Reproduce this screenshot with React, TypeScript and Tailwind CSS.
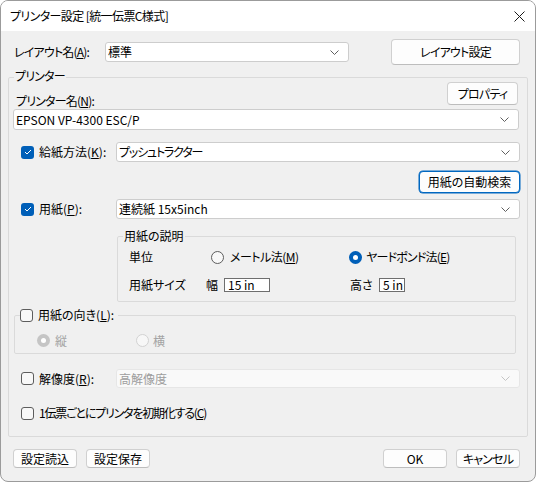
import React from 'react';

function Chevron({ disabled }: { disabled?: boolean }) {
  return (
    <svg width="9" height="5" viewBox="0 0 9 5" className="shrink-0">
      <path d="M0.5 0.5 L4.5 4.5 L8.5 0.5" fill="none" stroke={disabled ? '#c4c4c4' : '#5f5f5f'} strokeWidth="1" />
    </svg>
  );
}

function Select({
  value,
  className,
  textClass,
  disabled,
}: {
  value: string;
  className: string;
  textClass?: string;
  disabled?: boolean;
}) {
  return (
    <div
      className={
        'flex items-center justify-between rounded-[3px] border pl-[2px] pr-[9px] ' +
        (disabled ? 'bg-[#f9f9f9] border-[#e6e6e6] text-[#9d9d9d] ' : 'bg-white border-[#cdcdcd] ') +
        className
      }
    >
      <span className={textClass}>{value}</span>
      <Chevron disabled={disabled} />
    </div>
  );
}

function Button({ children, className, focused }: { children: React.ReactNode; className: string; focused?: boolean }) {
  return (
    <div
      className={
        'flex items-center justify-center rounded-[4px] border bg-[#fdfdfd] ' +
        (focused ? 'border-[#0067c0] shadow-[0_0_0_0.5px_#0067c0] ' : 'border-[#d0d0d0] border-b-[#bdbdbd] ') +
        className
      }
    >
      {children}
    </div>
  );
}

function Checkbox({ checked }: { checked?: boolean }) {
  if (checked) {
    return (
      <span className="flex h-[13px] w-[13px] shrink-0 items-center justify-center rounded-[3px] bg-[#005fb8]">
        <svg width="8" height="6" viewBox="0 0 8 6">
          <path d="M1 3 L3 5 L7 1" fill="none" stroke="#fff" strokeWidth="1" />
        </svg>
      </span>
    );
  }
  return <span className="h-[13px] w-[13px] shrink-0 rounded-[3px] border border-[#5d5d5d] bg-[#f8f8f8]" />;
}

function Radio({ checked, disabled }: { checked?: boolean; disabled?: boolean }) {
  if (checked) {
    return (
      <span
        className={
          'flex h-[13px] w-[13px] shrink-0 items-center justify-center rounded-full ' +
          (disabled ? 'bg-[#c5c5c5]' : 'bg-[#005fb8]')
        }
      >
        <span className="h-[5px] w-[5px] rounded-full bg-white" />
      </span>
    );
  }
  return (
    <span
      className={
        'h-[13px] w-[13px] shrink-0 rounded-full border ' +
        (disabled ? 'border-[#d2d2d2] bg-[#f7f7f7]' : 'border-[#5d5d5d] bg-[#f8f8f8]')
      }
    />
  );
}

export default function App() {
  return (
    <div className="h-[483px] w-[537px] bg-white font-[family-name:'Noto_Sans_CJK_JP',sans-serif] text-[12px] leading-[14px] text-black [font-feature-settings:'palt']">
      <div className="flex h-[482px] w-[536px] flex-col overflow-hidden rounded-[8px] border border-[#9b9b9b] bg-[#f0f0f0]">
        {/* title bar */}
        <div className="flex h-[30px] shrink-0 items-center justify-between bg-white pl-[9px] pr-[10px]">
          <span className="tracking-[-0.6px]">プリンター設定 [統一伝票C様式]</span>
          <svg width="11" height="11" viewBox="0 0 11 11">
            <path d="M0.5 0.5 L10.5 10.5 M10.5 0.5 L0.5 10.5" stroke="#1b1b1b" strokeWidth="1" />
          </svg>
        </div>

        {/* layout row */}
        <div className="mt-[8px] flex h-[26px] items-center pl-[13px] pr-[15px]">
          <span className="w-[91px] tracking-[-0.8px]">
            レイアウト名(<u>A</u>):
          </span>
          <Select value="標準" className="h-[20px] w-[244px]" />
          <Button className="ml-auto h-[26px] w-[129px] tracking-[-0.8px]">レイアウト設定</Button>
        </div>

        {/* printer group */}
        <div className="relative ml-[7px] mt-[12px] flex h-[360px] w-[520px] flex-col rounded-[2px] border border-[#dadada]">
          <span className="absolute -top-[9px] left-[5px] bg-[#f0f0f0] px-[1px] tracking-[-0.8px]">プリンター</span>

          <div className="mt-[4px] flex h-[23px] justify-between pl-[7px] pr-[9px]">
            <span className="mb-[-3px] self-end tracking-[-0.8px]">
              プリンター名(<u>N</u>):
            </span>
            <Button className="h-[23px] w-[71px] tracking-[-0.8px]">プロパティ</Button>
          </div>

          <Select value="EPSON VP-4300 ESC/P" className="ml-[4px] mt-[4px] h-[21px] w-[506px]" />

          <div className="mt-[12px] flex h-[20px] items-center pl-[12px]">
            <Checkbox checked />
            <span className="ml-[5px] w-[77px]">
              給紙方法(<u>K</u>):
            </span>
            <Select value="プッシュトラクター" textClass="tracking-[-1.2px]" className="h-[20px] w-[404px]" />
          </div>

          <Button focused className="mr-[7px] mt-[9px] h-[22px] w-[101px] self-end">
            用紙の自動検索
          </Button>

          <div className="mt-[6px] flex h-[20px] items-center pl-[12px]">
            <Checkbox checked />
            <span className="ml-[5px] w-[77px]">
              用紙(<u>P</u>):
            </span>
            <Select value="連続紙 15x5inch" className="h-[20px] w-[404px]" />
          </div>

          {/* paper description */}
          <div className="relative ml-[108px] mt-[17px] h-[66px] w-[399px] rounded-[2px] border border-[#dadada]">
            <span className="absolute -top-[8px] left-[5px] bg-[#f0f0f0] px-[1px]">用紙の説明</span>
            <div className="mt-[12px] flex h-[16px] items-center pl-[11px]">
              <span className="w-[82px]">単位</span>
              <div className="flex w-[138px] items-center">
                <Radio />
                <span className="ml-[6px] tracking-[-0.5px]">
                  メートル法(<u>M</u>)
                </span>
              </div>
              <div className="flex items-center">
                <Radio checked />
                <span className="ml-[4px] tracking-[-0.8px]">
                  ヤードポンド法(<u>E</u>)
                </span>
              </div>
            </div>
            <div className="mt-[12px] flex h-[16px] items-center pl-[11px]">
              <span className="w-[77px]">用紙サイズ</span>
              <span className="w-[18px]">幅</span>
              <span className="flex h-[14px] w-[46px] items-center border border-[#6e6e6e] bg-white pl-[3px]">15 in</span>
              <span className="w-[80px]" />
              <span className="w-[29px]">高さ</span>
              <span className="flex h-[14px] w-[26px] items-center border border-[#6e6e6e] bg-white pl-[3px]">5 in</span>
            </div>
          </div>

          {/* orientation */}
          <div className="relative ml-[5px] mt-[13px] h-[39px] w-[502px] rounded-[2px] border border-[#dadada]">
            <div className="absolute -top-[8px] left-[5px] flex items-center bg-[#f0f0f0] pr-[4px]">
              <Checkbox />
              <span className="ml-[5px]">
                用紙の向き(<u>L</u>):
              </span>
            </div>
            <div className="mt-[18px] flex h-[13px] items-center pl-[22px] text-[#a3a3a3]">
              <div className="flex w-[99px] items-center">
                <Radio checked disabled />
                <span className="ml-[5px]">縦</span>
              </div>
              <Radio disabled />
              <span className="ml-[4px]">横</span>
            </div>
          </div>

          <div className="mt-[15px] flex h-[19px] items-center pl-[12px]">
            <Checkbox />
            <span className="ml-[5px] w-[77px]">
              解像度(<u>R</u>):
            </span>
            <Select disabled value="高解像度" className="h-[19px] w-[404px]" />
          </div>

          <div className="mt-[15px] flex h-[20px] items-center pl-[12px]">
            <Checkbox />
            <span className="ml-[5px] tracking-[-1.2px]">
              1伝票ごとにプリンタを初期化する(<u>C</u>)
            </span>
          </div>
        </div>

        {/* footer buttons */}
        <div className="mt-[12px] flex h-[19px] pl-[12px] pr-[15px]">
          <Button className="h-[19px] w-[64px]">設定読込</Button>
          <Button className="ml-[9px] h-[19px] w-[64px]">設定保存</Button>
          <Button className="ml-auto h-[19px] w-[64px]">OK</Button>
          <Button className="ml-[9px] h-[19px] w-[64px] tracking-[-0.8px]">キャンセル</Button>
        </div>
      </div>
    </div>
  );
}
